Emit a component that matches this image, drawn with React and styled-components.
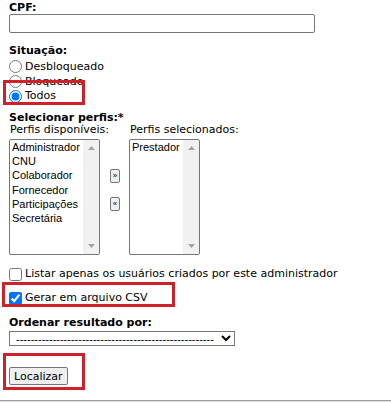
import React from "react";
import styled, { createGlobalStyle } from "styled-components";

const Global = createGlobalStyle`
  html, body { margin: 0; padding: 0; background: #fff; }
  body {
    font-family: "DejaVu Sans", Verdana, sans-serif;
    font-size: 11px;
    color: #000;
  }
  * { box-sizing: border-box; }
`;

const Form = styled.form`
  display: flex;
  flex-direction: column;
  align-items: flex-start;
  padding: 2px 0 0 9px;
`;

const Label = styled.div`
  font-weight: bold;
  line-height: 12px;
  margin-top: ${(p) => p.$mt || 0}px;
  white-space: nowrap;
`;

const Star = styled.span`
  font-weight: bold;
`;

const TextInput = styled.input`
  width: 306px;
  height: 19px;
  border: 1px solid #767676;
  border-radius: 2px;
  padding: 0 2px;
  font: inherit;
  background: #fff;
`;

const Group = styled.div`
  display: flex;
  flex-direction: column;
  margin-top: ${(p) => p.$mt || 0}px;
`;

const Row = styled.label`
  position: relative;
  display: flex;
  align-items: center;
  gap: 3px;
  height: ${(p) => p.$h || 14}px;
  line-height: 14px;
  white-space: nowrap;
  margin-top: ${(p) => p.$mt || 0}px;
`;

const Radio = styled.input.attrs({ type: "radio" })`
  width: 13px;
  height: 13px;
  margin: 0;
  accent-color: #0075ff;
`;

const Check = styled.input.attrs({ type: "checkbox" })`
  width: 13px;
  height: 13px;
  margin: 0;
  accent-color: #0075ff;
`;

const Frame = styled.span`
  position: absolute;
  left: ${(p) => p.$x}px;
  top: ${(p) => p.$y}px;
  width: ${(p) => p.$w}px;
  height: ${(p) => p.$h}px;
  border: 3px solid #d0212b;
  pointer-events: none;
`;

const Picker = styled.div`
  display: flex;
  align-items: flex-start;
`;

const PickCol = styled.div`
  display: flex;
  flex-direction: column;
  width: ${(p) => (p.$w ? `${p.$w}px` : "auto")};
  margin-left: ${(p) => p.$ml || 0}px;
`;

const SubLabel = styled.div`
  line-height: 12px;
  white-space: nowrap;
  margin-left: 1px;
`;

const ListBox = styled.div`
  display: flex;
  width: ${(p) => p.$w}px;
  height: 116px;
  margin-top: 3px;
  border: 1px solid #767676;
  border-radius: 2px;
  background: #fff;
  overflow: hidden;
`;

const Options = styled.div`
  flex: 1;
  display: flex;
  flex-direction: column;
  font-family: "Liberation Sans", Arial, sans-serif;
  font-size: 11px;
  line-height: 14.2px;
`;

const Option = styled.div`
  padding: 0 2px;
  white-space: nowrap;
`;

const ScrollBar = styled.div`
  width: 16px;
  background: #f1f1f1;
  display: flex;
  flex-direction: column;
  justify-content: space-between;
  align-items: center;
  padding: 6px 0 6px;
`;

const Arrow = ({ down }) => (
  <svg width="7" height="4" viewBox="0 0 7 4">
    {down ? (
      <polygon points="0,0 7,0 3.5,4" fill="#a3a3a3" />
    ) : (
      <polygon points="0,4 7,4 3.5,0" fill="#a3a3a3" />
    )}
  </svg>
);

const MoveCol = styled.div`
  align-self: center;
  display: flex;
  flex-direction: column;
  gap: 14px;
  margin-left: 1px;
  padding-top: 1px;
`;

const MoveBtn = styled.button`
  width: 10px;
  height: 14px;
  padding: 0;
  border: 1px solid #767676;
  border-radius: 2px;
  background: #efefef;
  font-family: "Liberation Sans", Arial, sans-serif;
  font-size: 8px;
  line-height: 10px;
  color: #000;
  display: flex;
  align-items: center;
  justify-content: center;
`;

const Select = styled.select`
  width: 226px;
  height: 15px;
  margin-top: 2px;
  border: 1px solid #767676;
  border-radius: 0;
  padding: 0 0 0 2px;
  font-family: "Liberation Sans", Arial, sans-serif;
  font-size: 11px;
  background: #fff;
  color: #000;
`;

const BtnWrap = styled.div`
  position: relative;
  margin-top: 21px;
`;

const Button = styled.button`
  height: 18px;
  padding: 0 4px;
  border: 1px solid #767676;
  border-radius: 2px;
  background: #efefef;
  font-family: "DejaVu Sans", Verdana, sans-serif;
  font-size: 11px;
  color: #000;
`;

const Rule = styled.hr`
  margin: 15px 0 0;
  border: none;
  border-top: 1px solid #9a9a9a;
  border-bottom: 1px solid #e0e0e0;
`;

export default function App() {
  const dashes = "-".repeat(54);
  return (
    <>
      <Global />
      <Form onSubmit={(e) => e.preventDefault()}>
        <Label>CPF:</Label>
        <TextInput type="text" />

        <Label $mt={12}>Situação:</Label>
        <Group $mt={2}>
          <Row $h={15}>
            <Radio name="sit" />
            Desbloqueado
          </Row>
          <Row $h={15}>
            <Radio name="sit" />
            Bloqueado
          </Row>
          <Row $h={14}>
            <Radio name="sit" defaultChecked />
            Todos
            <Frame $x={-6} $y={-9} $w={82} $h={25} />
          </Row>
        </Group>

        <Label $mt={9}>
          Selecionar perfis:<Star>*</Star>
        </Label>
        <Picker>
          <PickCol $w={100}>
            <SubLabel>Perfis disponíveis:</SubLabel>
            <ListBox $w={91}>
              <Options>
                <Option>Administrador</Option>
                <Option>CNU</Option>
                <Option>Colaborador</Option>
                <Option>Fornecedor</Option>
                <Option>Participações</Option>
                <Option>Secretária</Option>
              </Options>
              <ScrollBar>
                <Arrow />
                <Arrow down />
              </ScrollBar>
            </ListBox>
          </PickCol>
          <MoveCol>
            <MoveBtn type="button">»</MoveBtn>
            <MoveBtn type="button">«</MoveBtn>
          </MoveCol>
          <PickCol $ml={9}>
            <SubLabel>Perfis selecionados:</SubLabel>
            <ListBox $w={71}>
              <Options>
                <Option>Prestador</Option>
              </Options>
              <ScrollBar>
                <Arrow />
                <Arrow down />
              </ScrollBar>
            </ListBox>
          </PickCol>
        </Picker>

        <Row $mt={12}>
          <Check />
          Listar apenas os usuários criados por este administrador
        </Row>
        <Row $mt={10}>
          <Check defaultChecked />
          Gerar em arquivo CSV
          <Frame $x={-7} $y={-9} $w={173} $h={25} />
        </Row>

        <Label $mt={12}>Ordenar resultado por:</Label>
        <Select defaultValue="">
          <option value="">{dashes}</option>
        </Select>

        <BtnWrap>
          <Button type="submit">Localizar</Button>
          <Frame $x={-6} $y={-14} $w={82} $h={37} />
        </BtnWrap>
      </Form>
      <Rule />
    </>
  );
}
